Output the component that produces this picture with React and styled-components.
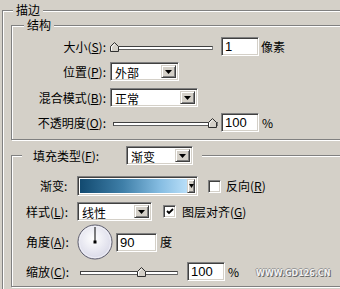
import React from 'react';
import styled, { createGlobalStyle } from 'styled-components';

const GlobalStyle = createGlobalStyle`
  html, body { margin: 0; padding: 0; background: #d4d0c8; overflow: hidden; }
  body {
    font-family: "Noto Sans CJK SC", "Liberation Sans", sans-serif;
    font-size: 12px;
    color: #000;
  }
  #root { width: 340px; height: 289px; overflow: hidden; }
`;

const Group = styled.div`
  display: flex;
  flex-direction: column;
  border: 1px solid #808080;
  box-shadow: inset 1px 1px 0 #fff, 1px 1px 0 #fff;
  margin: ${(p) => p.$m};
  padding: ${(p) => p.$p || '0'};
  ${(p) => (p.$w ? `width: ${p.$w}px;` : '')}
`;

const Caption = styled.div`
  align-self: flex-start;
  display: flex;
  align-items: center;
  height: ${(p) => p.$h || 14}px;
  line-height: 14px;
  margin: ${(p) => p.$mt}px 0 0 ${(p) => p.$ml}px;
  padding: 0 ${(p) => p.$pr ?? 3}px 0 ${(p) => p.$pl ?? 3}px;
  background: #d4d0c8;
  white-space: nowrap;
`;

const Row = styled.div`
  display: flex;
  align-items: center;
  height: ${(p) => p.$h || 19}px;
  margin-top: ${(p) => p.$mt || 0}px;
  white-space: nowrap;
`;

const Label = styled.div`
  flex: none;
  box-sizing: border-box;
  width: ${(p) => p.$w}px;
  padding-left: ${(p) => p.$pl || 0}px;
  text-align: ${(p) => p.$align || 'left'};
  line-height: 14px;
`;

const Mn = styled.u`
  text-decoration: underline;
  text-underline-offset: 1px;
`;

const Sunken = styled.div`
  box-sizing: border-box;
  border: 1px solid;
  border-color: #808080 #fff #fff #808080;
  box-shadow: inset 1px 1px 0 #404040, inset -1px -1px 0 #d4d0c8;
  background: #fff;
`;

const Field = styled(Sunken)`
  flex: none;
  width: ${(p) => p.$w}px;
  height: ${(p) => p.$h || 19}px;
  margin-left: ${(p) => p.$ml || 0}px;
  padding-left: 3px;
  font-family: "Liberation Sans", Arial, sans-serif;
  font-size: 13px;
  line-height: 17px;
`;

const Unit = styled.span`
  margin-left: ${(p) => p.$ml ?? 3}px;
  line-height: 14px;
`;

const SelectBox = styled(Sunken)`
  flex: none;
  display: flex;
  align-items: stretch;
  width: ${(p) => p.$w}px;
  height: 19px;
  margin-left: ${(p) => p.$ml || 0}px;
  padding: 2px;
`;

const SelectText = styled.div`
  flex: 1;
  padding-left: 2px;
  line-height: 15px;
`;

const DropButton = styled.div`
  flex: none;
  width: ${(p) => p.$w || 15}px;
  box-sizing: border-box;
  display: flex;
  align-items: center;
  justify-content: center;
  background: #d4d0c8;
  border: 1px solid;
  border-color: #d4d0c8 #404040 #404040 #d4d0c8;
  box-shadow: inset 1px 1px 0 #fff, inset -1px -1px 0 #808080;
`;

const Arrow = ({ w = 7 }) => (
  <svg width={w} height="4" viewBox={`0 0 ${w} 4`}>
    <polygon points={`0,0 ${w},0 ${w / 2},4`} fill="#000" />
  </svg>
);

const Select = ({ w, ml, children }) => (
  <SelectBox $w={w} $ml={ml}>
    <SelectText>{children}</SelectText>
    <DropButton>
      <Arrow />
    </DropButton>
  </SelectBox>
);

const SliderWrap = styled.div`
  position: relative;
  flex: none;
  display: flex;
  align-items: center;
  width: ${(p) => p.$w}px;
  height: 19px;
  margin-left: ${(p) => p.$ml || 0}px;
`;

const Track = styled.div`
  flex: 1;
  height: 4px;
  margin-top: 3px;
  box-sizing: border-box;
  border: 1px solid;
  border-color: #404040 #808080 #606060 #404040;
  background: #fff;
`;

const Thumb = styled.svg`
  position: absolute;
  top: 5px;
`;

const Slider = ({ w, ml, pos }) => (
  <SliderWrap $w={w} $ml={ml}>
    <Track />
    <Thumb width="9" height="10" viewBox="0 0 9 10" style={{ left: pos }}>
      <polygon points="0.5,9.5 0.5,4.5 4.5,0.5 8.5,4.5 8.5,9.5" fill="#d4d0c8" stroke="#303030" />
      <polyline points="1.5,8.5 1.5,5 4.5,2" fill="none" stroke="#fff" />
    </Thumb>
  </SliderWrap>
);

const GradientBox = styled(Sunken)`
  flex: none;
  display: flex;
  width: ${(p) => p.$w}px;
  height: 20px;
  padding: 2px;
`;

const GradientFill = styled.div`
  flex: 1;
  background: linear-gradient(90deg, #124a70 0%, #3f7fa8 40%, #86bde2 75%, #b8def8 100%);
`;

const CheckBox = styled(Sunken)`
  flex: none;
  width: 13px;
  height: 13px;
  margin-left: ${(p) => p.$ml || 0}px;
  display: flex;
  align-items: center;
  justify-content: center;
`;

const Check = () => (
  <svg width="8" height="7" viewBox="0 0 8 7">
    <path d="M1 3 L3 5 L7 1" fill="none" stroke="#000" strokeWidth="1.8" />
  </svg>
);

const Dial = styled.svg`
  flex: none;
`;

const Watermark = styled.span`
  align-self: flex-end;
  margin: 0 0 3px 17px;
  font-family: "DejaVu Sans", sans-serif;
  font-weight: bold;
  font-size: 8px;
  line-height: 8px;
  letter-spacing: 0;
  color: #f2f2f2;
  text-shadow: 1px 1px 0 #6a6a6a, -1px 0 0 #9a9a9a, 0 -1px 0 #9a9a9a;
`;

export default function App() {
  return (
    <>
      <GlobalStyle />
      <Group $m="10px 0 0 2px" $w={420} $p="0 0 30px 0">
        <Caption $mt={-8} $ml={10}>描边</Caption>

        <Group $m="8px 0 0 8px" $p="0 0 7px 0">
          <Caption $mt={-8} $ml={12}>结构</Caption>

          <Row $mt={5}>
            <Label $w={94} $align="right">大小(<Mn>S</Mn>):</Label>
            <Slider w={103} ml={4} pos={0} />
            <Field $w={38} $ml={8}>1</Field>
            <Unit $ml={2}>像素</Unit>
          </Row>

          <Row $mt={6}>
            <Label $w={94} $align="right">位置(<Mn>P</Mn>):</Label>
            <Select w={69} ml={4}>外部</Select>
          </Row>

          <Row $mt={7}>
            <Label $w={94} $align="right">混合模式(<Mn>B</Mn>):</Label>
            <Select w={88} ml={4}>正常</Select>
          </Row>

          <Row $mt={6}>
            <Label $w={94} $align="right">不透明度(<Mn>O</Mn>):</Label>
            <Slider w={105} ml={7} pos={95} />
            <Field $w={38} $ml={3}>100</Field>
            <Unit>%</Unit>
          </Row>
        </Group>

        <Group $m="15px 0 0 8px" $p="0 0 5px 0">
          <Caption $mt={-10} $ml={10} $h={19} $pl={11} $pr={9}>
            <Label $w={93}>填充类型(<Mn>F</Mn>):</Label>
            <Select w={67}>渐变</Select>
          </Caption>

          <Row $mt={11} $h={20}>
            <Label $w={65} $pl={28}>渐变:</Label>
            <GradientBox $w={121}>
              <GradientFill />
              <DropButton $w={8}>
                <Arrow w={5} />
              </DropButton>
            </GradientBox>
            <CheckBox $ml={10} />
            <Unit $ml={5}>反向(<Mn>R</Mn>)</Unit>
          </Row>

          <Row $mt={6}>
            <Label $w={65} $pl={14}>样式(<Mn>L</Mn>):</Label>
            <Select w={75}>线性</Select>
            <CheckBox $ml={11}>
              <Check />
            </CheckBox>
            <Unit $ml={6}>图层对齐(<Mn>G</Mn>)</Unit>
          </Row>

          <Row $mt={3} $h={36}>
            <Label $w={65} $pl={14}>角度(<Mn>A</Mn>):</Label>
            <Dial width="36" height="36" viewBox="0 0 36 36">
              <defs>
                <radialGradient id="dialFill" cx="45%" cy="40%" r="65%">
                  <stop offset="0" stopColor="#ffffff" />
                  <stop offset="1" stopColor="#d6d6e6" />
                </radialGradient>
              </defs>
              <circle cx="18" cy="18" r="17" fill="url(#dialFill)" stroke="#5a5a6a" />
              <circle cx="18" cy="18" r="15.8" fill="none" stroke="#f4f4fa" strokeWidth="0.8" />
              <line x1="18" y1="18" x2="18" y2="3" stroke="#000" strokeWidth="1" />
              <rect x="16.5" y="16.5" width="3" height="3" fill="#000" />
            </Dial>
            <Field $w={41} $ml={3}>90</Field>
            <Unit>度</Unit>
          </Row>

          <Row $mt={2}>
            <Label $w={65} $pl={14}>缩放(<Mn>C</Mn>):</Label>
            <Slider w={98} ml={3} pos={57} />
            <Field $w={38} $ml={9}>100</Field>
            <Unit>%</Unit>
            <Watermark>WWW.GD126.CN</Watermark>
          </Row>
        </Group>
      </Group>
    </>
  );
}
